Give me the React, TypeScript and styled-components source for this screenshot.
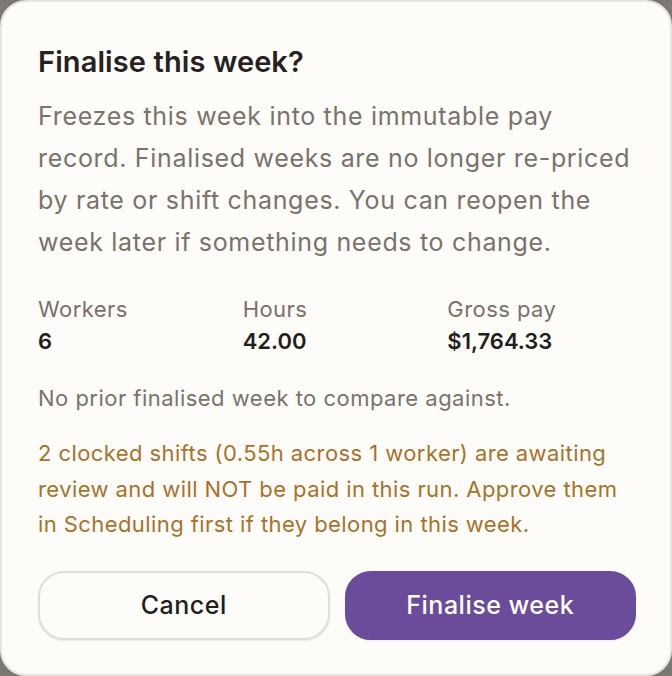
import React from "react";
import styled, { createGlobalStyle } from "styled-components";

const Global = createGlobalStyle`
  html, body { margin: 0; padding: 0; background: #7b7873; }
  body { font-family: "Inter", "Liberation Sans", sans-serif; }
  * { box-sizing: border-box; }
`;

const Card = styled.div`
  width: 672px;
  height: 676px;
  background: #fdfcf9;
  border: 2px solid #e6e4e0;
  border-radius: 26px;
  padding: 38px 34px 0 36px;
  display: flex;
  flex-direction: column;
`;

const Title = styled.h2`
  margin: 0;
  font-size: 29px;
  line-height: 44px;
  font-weight: 600;
  letter-spacing: 0.1px;
  color: #27221f;
`;

const Body = styled.p`
  margin: 11px 0 0;
  font-size: 25px;
  line-height: 42px;
  letter-spacing: 0.68px;
  color: #7a726b;
`;

const Stats = styled.div`
  margin-top: 30px;
  display: grid;
  grid-template-columns: repeat(3, 1fr);
  gap: 16px;
`;

const Stat = styled.div`
  display: flex;
  flex-direction: column;
`;

const Label = styled.span`
  font-size: 22px;
  line-height: 32px;
  letter-spacing: 0.45px;
  color: #79716a;
`;

const Value = styled.span`
  font-size: 22px;
  line-height: 33px;
  font-weight: 600;
  letter-spacing: 0;
  color: #221e1b;
`;

const Note = styled.p<{ $tone?: "muted" | "warn" }>`
  margin: ${(p) => (p.$tone === "warn" ? "22px" : "24px")} 0 0;
  font-size: 22px;
  letter-spacing: ${(p) => (p.$tone === "warn" ? "0.42px" : "0.48px")};
  line-height: ${(p) => (p.$tone === "warn" ? "35.5px" : "32px")};
  color: ${(p) => (p.$tone === "warn" ? "#a8722b" : "#7a726b")};
`;

const Actions = styled.div`
  margin-top: 28px;
  display: grid;
  grid-template-columns: 1fr 1fr;
  gap: 15px;
`;

const Button = styled.button<{ $primary?: boolean }>`
  height: 69px;
  border-radius: 26px;
  font-family: inherit;
  font-size: 25px;
  font-weight: 500;
  letter-spacing: 0.5px;
  cursor: pointer;
  border: 2px solid ${(p) => (p.$primary ? "#6a4b9c" : "#e0dedb")};
  background: ${(p) => (p.$primary ? "#6b4c9b" : "#fdfcf9")};
  color: ${(p) => (p.$primary ? "#ffffff" : "#221e1b")};
  box-shadow: 0 1px 2px rgba(0, 0, 0, 0.08);
`;

export default function App() {
  return (
    <>
      <Global />
      <Card>
        <Title>Finalise this week?</Title>
        <Body>
          Freezes this week into the immutable pay record. Finalised weeks are
          no longer re-priced by rate or shift changes. You can reopen the week
          later if something needs to change.
        </Body>
        <Stats>
          <Stat>
            <Label>Workers</Label>
            <Value>6</Value>
          </Stat>
          <Stat>
            <Label>Hours</Label>
            <Value>42.00</Value>
          </Stat>
          <Stat>
            <Label>Gross pay</Label>
            <Value>$1,764.33</Value>
          </Stat>
        </Stats>
        <Note $tone="muted">No prior finalised week to compare against.</Note>
        <Note $tone="warn">
          2 clocked shifts (0.55h across 1 worker) are awaiting review and will
          NOT be paid in this run. Approve them in Scheduling first if they
          belong in this week.
        </Note>
        <Actions>
          <Button>Cancel</Button>
          <Button $primary>Finalise week</Button>
        </Actions>
      </Card>
    </>
  );
}
